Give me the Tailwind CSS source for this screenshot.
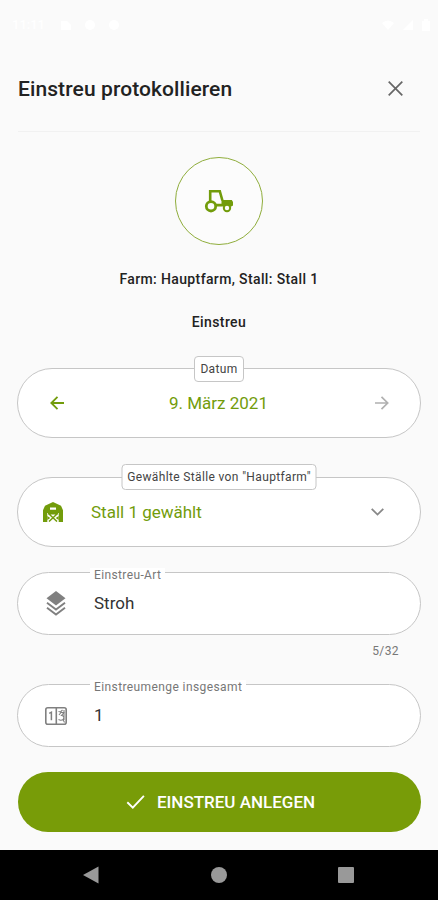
<!DOCTYPE html>
<html lang="de">
<head>
<meta charset="utf-8">
<meta name="viewport" content="width=device-width, initial-scale=1">
<title>Einstreu protokollieren</title>
<script src="https://cdn.jsdelivr.net/npm/@tailwindcss/browser@4"></script>
</head>
<body class="bg-[#fafafa]">
<div class="flex h-[900px] w-[438px] flex-col overflow-hidden bg-[#fafafa] font-['Roboto',sans-serif] text-[#222]">
  <!-- Status bar -->
  <div class="flex h-[50px] shrink-0 items-center justify-between pl-3 pr-2 text-white">
    <div class="flex items-center gap-3">
      <span class="w-[36px] text-[13px] font-medium">11:11</span>
      <svg class="h-3 w-3" viewBox="0 0 12 12" fill="currentColor"><path d="M1 2h6l4 4v5H1z"/></svg>
      <svg class="h-3 w-3" viewBox="0 0 12 12" fill="currentColor"><circle cx="6" cy="6" r="5"/></svg>
      <svg class="h-3 w-3" viewBox="0 0 12 12" fill="currentColor"><circle cx="6" cy="6" r="5"/></svg>
    </div>
    <div class="flex items-center gap-2">
      <svg class="h-3 w-3" viewBox="0 0 12 12" fill="currentColor"><path d="M0 4Q6-1 12 4L6 11z"/></svg>
      <svg class="h-3 w-3" viewBox="0 0 12 12" fill="currentColor"><path d="M11 1v10H1z"/></svg>
      <svg class="h-3 w-2" viewBox="0 0 8 12" fill="currentColor"><path d="M0 2h2V0h4v2h2v10H0z"/></svg>
    </div>
  </div>

  <!-- Title -->
  <header class="mx-[18px] flex h-[82px] shrink-0 items-center justify-between border-b border-[#f1f1f1] pr-[17px] pb-[4px]">
    <h1 class="text-[21px] leading-6 font-medium tracking-[0.1px] whitespace-nowrap">Einstreu protokollieren</h1>
    <svg class="h-[15px] w-[15px]" viewBox="0 0 15 15" fill="none" stroke="#666" stroke-width="1.7"><path d="M.7.7l13.6 13.6M14.3.7L.7 14.3"/></svg>
  </header>

  <!-- Summary -->
  <section class="flex shrink-0 flex-col items-center pt-[25px]">
    <div class="flex h-[88px] w-[88px] items-center justify-center rounded-full border border-[#8fad3b] bg-[#fcfcfc]">
      <svg class="h-[24px] w-[30px]" viewBox="0 0 30 24" fill="none" stroke="#729c0b" stroke-width="2.6">
        <path d="M6.200 12V2.200h9.600l2.600 9.300"/>
        <path d="M17.500 11h10.300l1.200 2v3.600l-2.200 1.200a4.400 4.400 0 0 0-7.400-.4H11.500v-2.700h6z" fill="#729c0b" stroke="none"/>
        <circle cx="7" cy="17.300" r="4.700" stroke-width="2.800"/>
        <circle cx="23" cy="19" r="3.200" stroke-width="2"/>
      </svg>
    </div>
    <p class="mt-[24px] text-[14px] leading-5 font-medium tracking-[0.37px]">Farm: Hauptfarm, Stall: Stall 1</p>
    <p class="mt-[23px] text-[14px] leading-5 font-medium tracking-[0.4px]">Einstreu</p>
  </section>

  <!-- Form -->
  <main class="flex shrink-0 flex-col px-[17px]">
    <div class="relative mt-[36px] flex h-[70px] items-center justify-between rounded-full border border-[#c6c6c6] bg-white pl-[32px] pr-[31px]">
      <span class="absolute top-[-13px] left-1/2 flex h-[26px] w-[50px] -translate-x-1/2 items-center justify-center rounded-[4px] border border-[#c6c6c6] bg-white text-[12px] tracking-[0.35px] text-[#444]">Datum</span>
      <svg class="h-[14px] w-[14px]" viewBox="0 0 14 14" fill="none" stroke="#729c0b" stroke-width="1.8"><path d="M14 7H1.500M7.500.8L1.300 7l6.200 6.200"/></svg>
      <span class="pr-[2px] text-[17px] leading-6 text-[#729c0b]">9. März 2021</span>
      <svg class="h-[14px] w-[14px]" viewBox="0 0 14 14" fill="none" stroke="#b0b0b0" stroke-width="1.700"><path d="M0 7h12.500M6.500.8L12.700 7l-6.200 6.200"/></svg>
    </div>

    <div class="relative mt-[39px] flex h-[70px] items-center rounded-full border border-[#c6c6c6] bg-white pl-[25px] pr-[36px]">
      <span class="absolute top-[-14px] left-1/2 flex h-[26px] w-[195px] -translate-x-1/2 items-center justify-center rounded-[4px] border border-[#c6c6c6] bg-white text-[12px] tracking-[0.36px] whitespace-nowrap text-[#444]">Gewählte Ställe von "Hauptfarm"</span>
      <svg class="h-[20px] w-[20px]" viewBox="0 0 20 20" fill="#729c0b">
        <path fill-rule="evenodd" d="M10 0l8 3.700L20 8.200V20h-4.300v-9H4.300v9H0V8.200l2-4.500zM7 5.500v2.300h6V5.500z"/>
        <path d="M5 11.700h10M6 12l8 7.500M14 12l-8 7.500" fill="none" stroke="#729c0b" stroke-width="1.500"/>
        <path d="M4.300 14l3 2-3 2zM15.700 14l-3 2 3 2z"/>
      </svg>
      <span class="ml-[28px] grow text-[17px] leading-6 text-[#729c0b]">Stall 1 gewählt</span>
      <svg class="h-[8px] w-[13px]" viewBox="0 0 13 8" fill="none" stroke="#888" stroke-width="1.800"><path d="M.7.8l5.800 5.800L12.300.8"/></svg>
    </div>

    <div class="relative mt-[25px] flex h-[63px] items-center rounded-full border border-[#c6c6c6] bg-white pl-[28px]">
      <span class="absolute top-[-5px] left-[72px] bg-white px-[4px] text-[12px] leading-[14px] tracking-[0.37px] text-[#777]">Einstreu-Art</span>
      <svg class="h-[25px] w-[20px]" viewBox="0 0 20 25" fill="#808080">
        <path d="M10 0l9.500 7.200L10 14.400.5 7.200z"/>
        <path d="M1 11.700l9 6.800 9-6.800M1 16.800l9 6.800 9-6.800" fill="none" stroke="#808080" stroke-width="1.900"/>
      </svg>
      <span class="ml-[28px] pb-[2px] text-[17px] leading-6 text-[#333]">Stroh</span>
    </div>
    <span class="mt-[9px] mr-[22px] self-end text-[12px] leading-[15px] tracking-[0.4px] text-[#777]">5/32</span>

    <div class="relative mt-[25px] flex h-[63px] items-center rounded-full border border-[#c6c6c6] bg-white pl-[27px]">
      <span class="absolute top-[-5px] left-[72px] bg-white px-[4px] text-[12px] leading-[14px] tracking-[0.4px] whitespace-nowrap text-[#777]">Einstreumenge insgesamt</span>
      <svg class="h-[18px] w-[22px]" viewBox="0 0 22 18" fill="none" stroke="#808080" stroke-width="1.600">
        <rect x=".8" y=".8" width="20.400" height="16.400" rx="2"/>
        <path d="M11.300 1v16"/>
        <path d="M4.200 6.300l2.200-1.100v8" stroke-width="1.500"/>
        <path d="M13.500 4.500l2 .5 2-2M14 8l2-2.500h3L16.500 8.500c3.500 0 3 5-1 4.700l-2-.8M18 12.500l1.500 3M19 3v10" stroke-width="1.100"/>
      </svg>
      <span class="ml-[27px] pb-[2px] text-[17px] leading-6 text-[#333]">1</span>
    </div>

    <button class="mt-[25px] ml-px flex h-[60px] items-center justify-center gap-[12px] rounded-full bg-[#789c08] pl-[2px] text-white">
      <svg class="h-[14px] w-[19px]" viewBox="0 0 18 14" fill="none" stroke="currentColor" stroke-width="1.900"><path d="M.8 7.300l5.500 5.300L17.400.9"/></svg>
      <span class="text-[17px] leading-6 font-medium">EINSTREU ANLEGEN</span>
    </button>
  </main>

  <!-- System navigation -->
  <nav class="mt-auto flex h-[50px] shrink-0 items-center justify-between bg-black pl-[83px] pr-[84px]">
    <svg class="h-[18px] w-[16px]" viewBox="0 0 16 18" fill="#999"><path d="M15.500.5v17L0 9z"/></svg>
    <span class="h-[16px] w-[16px] rounded-full bg-[#999]"></span>
    <span class="h-[16px] w-[16px] rounded-[1px] bg-[#999]"></span>
  </nav>
</div>
</body>
</html>
